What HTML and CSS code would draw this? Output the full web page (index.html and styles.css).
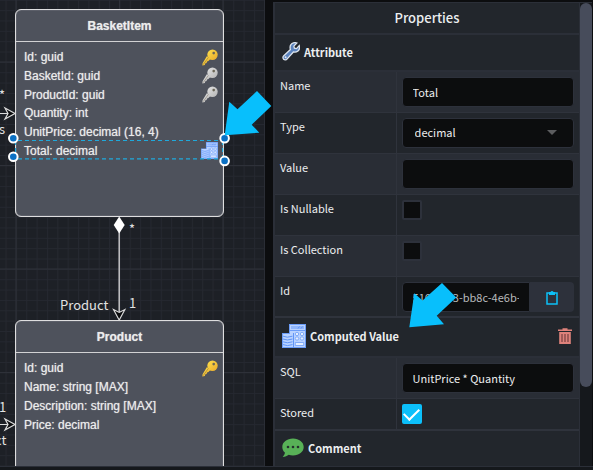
FILE: index.html
```html
<!DOCTYPE html>
<html lang="en">
<head>
<meta charset="utf-8">
<title>Domain Designer</title>
<link rel="stylesheet" href="styles.css">
</head>
<body>
<svg class="defs" aria-hidden="true">
  <defs>
    <linearGradient id="gold" x1="0" y1="0" x2="1" y2="1"><stop offset="0" stop-color="#ffe04a"/><stop offset="1" stop-color="#e8a92c"/></linearGradient>
    <linearGradient id="silver" x1="0" y1="0" x2="1" y2="1"><stop offset="0" stop-color="#e2e2e2"/><stop offset="1" stop-color="#b5b5b5"/></linearGradient>
    <symbol id="key-shape" viewBox="0 0 16 17">
      <path d="M4.800 7.200.600 14.200.300 16.400l2.600-.500.200-1.500 1.500-.300.400-1.700 1.400-.400 2.500-2.500z"/>
      <circle cx="10.500" cy="5.800" r="5.200"/>
      <path d="M6.400 8.400 1.200 15.600" fill="none" stroke="#60533b" stroke-opacity=".5" stroke-width=".8"/>
      <circle cx="11.700" cy="4.100" r="1.300" fill="#6b6656"/>
    </symbol>
    <symbol id="calculator" viewBox="0 0 24 24">
      <path fill="#6c9df8" d="M7 0h17v24H0V9h7z"/>
      <path fill="#b9d2ff" d="M8 1h15v5H8zM8 7h15v16H8zM1 10h10v13H1z"/>
      <path fill="#8fb5fb" d="M9 2h13v3H9z"/>
      <path d="M16 4.500l1.500-2M19 4.500l1.500-2M1 12.200q4 2 9.500 0M1 15q4 2 9.500 0M1 17.800q4 2 9.500 0M1 20.600q4 2 9.500 0M11.500 9v15" fill="none" stroke="#5f94f6" stroke-width="1"/>
      <g fill="#e6efff" stroke="#6c9df8" stroke-width=".8"><circle cx="15" cy="10" r="1.700"/><circle cx="20" cy="10" r="1.700"/><circle cx="15" cy="14.500" r="1.700"/><circle cx="20" cy="14.500" r="1.700"/><path d="M13.300 18.500h8.400v3h-8.400z"/></g>
    </symbol>
  </defs>
</svg>
<div class="app">
  <main class="canvas">
    <svg class="layer" aria-hidden="true">
      <defs>
        <pattern id="minor" x="15.900" y="61.900" width="10.350" height="10.350" patternUnits="userSpaceOnUse"><path d="M0 .5h10.350M.5 0v10.350" stroke="#252830" fill="none"/></pattern>
        <pattern id="major" x="15.500" y="61.500" width="103.500" height="103.500" patternUnits="userSpaceOnUse"><path d="M0 .5h103.500M.5 0v103.500" stroke="#2e3139" fill="none"/></pattern>
      </defs>
      <rect width="100%" height="100%" fill="url(#minor)"/>
      <rect width="100%" height="100%" fill="url(#major)"/>
    </svg>

    <section class="entity basket">
      <h2>BasketItem</h2>
      <ul>
        <li>Id: guid <svg class="key" fill="url(#gold)"><use href="#key-shape"/></svg></li>
        <li>BasketId: guid <svg class="key" fill="url(#silver)"><use href="#key-shape"/></svg></li>
        <li>ProductId: guid <svg class="key" fill="url(#silver)"><use href="#key-shape"/></svg></li>
        <li>Quantity: int</li>
        <li>UnitPrice: decimal (16, 4)</li>
        <li>Total: decimal <svg class="calc"><use href="#calculator"/></svg></li>
      </ul>
    </section>
    <section class="entity product">
      <h2>Product</h2>
      <ul>
        <li>Id: guid <svg class="key" fill="url(#gold)"><use href="#key-shape"/></svg></li>
        <li>Name: string [MAX]</li>
        <li>Description: string [MAX]</li>
        <li>Price: decimal</li>
      </ul>
    </section>

    <svg class="layer" aria-hidden="true">
      <g fill="none" stroke="#1fa9dc" stroke-width="1.200" stroke-dasharray="4 3"><path d="M18 140.500h203M18 158.800h203M222.600 141v18M15.500 141v18"/></g>
      <g fill="#0a70c4" stroke="#fff" stroke-width="2"><circle cx="13.300" cy="138.300" r="4.300"/><circle cx="13.300" cy="156.700" r="4.300"/><circle cx="224.600" cy="138.300" r="4.300"/><circle cx="224.600" cy="160.900" r="4.300"/></g>
      <path d="M119.200 232v80" stroke="#c4c4c6" stroke-width="1.500"/>
      <path d="M119.200 216.500l5.500 8.500-5.500 8.500-5.500-8.500z" fill="#fff"/>
      <path d="M113.500 309.500l5.700 3 5.700-3-5.700 10.500z" fill="#0b0c0e" stroke="#dcdcdc" stroke-width="1.100"/>
      <g fill="#0b0c0e" stroke="#dcdcdc" stroke-width="1.200"><path d="M0 113.500h8M5 108l10 5.500-10 5.500 3-5.500z"/><path d="M0 424.500h8M5 419l10 5.500-10 5.500 3-5.500z"/></g>
    </svg>
    <span class="mark many-left">*</span>
    <span class="mark role-left">s</span>
    <span class="mark many">*</span>
    <span class="mark role">Product</span>
    <span class="mark one">1</span>
    <span class="mark one-left">1</span>
    <span class="mark end-left">ct</span>
  </main>

  <aside class="panel">
    <div class="scroller">
      <h1>Properties</h1>
      <h2 class="group"><svg width="18" height="19" viewBox="0 0 18 19"><path d="M11.500.8c1.300-.3 2.500-.2 3.400.2l-3 3.100.5 2 2.100.5 2.800-3c.6 2 .2 4-1.300 5.300-1.400 1.200-3 1.500-4.600 1.100L5.200 16.800c-1 1.300-2.600 1.300-3.600.4-1-1-.9-2.500.2-3.500L8.400 7.600C7.600 4.400 8.800 1.700 11.500.8z" fill="#5b83be" stroke="#dde4ed" stroke-width="1.300"/><circle cx="3.600" cy="15.300" r="1" fill="#dde4ed"/></svg>Attribute</h2>
      <div class="row alt"><label for="name">Name</label><div class="value"><input class="text" id="name" type="text" value="Total"></div></div>
      <div class="row"><label for="type">Type</label><div class="value select"><select class="text" id="type"><option>decimal</option></select></div></div>
      <div class="row alt"><label for="val">Value</label><div class="value"><input class="text" id="val" type="text"></div></div>
      <div class="row"><label for="nullable">Is Nullable</label><div class="value"><input class="check" id="nullable" type="checkbox"></div></div>
      <div class="row alt"><label for="collection">Is Collection</label><div class="value"><input class="check" id="collection" type="checkbox"></div></div>
      <div class="row"><label for="id">Id</label><div class="value joined"><input class="text" id="id" type="text" readonly value="51623f73-bb8c-4e6b-"><button class="copy" type="button" aria-label="Copy"><svg width="12" height="15" viewBox="0 0 12 15"><path d="M1 3h10v11H1z" fill="none" stroke="#0cc0f7" stroke-width="1.500"/><path d="M3 2h1.500a1.600 1.600 0 0 1 3 0H9v3H3z" fill="#0cc0f7"/></svg></button></div></div>
      <h2 class="group tall"><svg width="24" height="24"><use href="#calculator"/></svg>Computed Value<button class="trash" type="button" aria-label="Remove"><svg width="14" height="16" viewBox="0 0 14 16"><path d="M0 1.500h4.500V.3h5v1.200H14V3H0zM1.200 4h11.600v12H1.200z" fill="#df827b"/><path d="M4 6v8M7 6v8M10 6v8" stroke="#8c4d4c" stroke-width="1.500"/></svg></button></h2>
      <div class="row alt"><label for="sql">SQL</label><div class="value"><input class="text" id="sql" type="text" value="UnitPrice * Quantity"></div></div>
      <div class="row short"><label for="stored">Stored</label><div class="value"><input class="check" id="stored" type="checkbox" checked></div></div>
      <h2 class="group"><svg width="22" height="20" viewBox="0 0 22 20"><path d="M11 .5c6 0 10.700 3.600 10.700 8.500S17 17.500 11 17.500c-1.600 0-3-.2-4.300-.7-1.500 1.300-3.500 2-6 2.200 1.400-1.400 2.100-2.800 2.200-4.400C1.200 13.100.3 11.200.3 9 .3 4.100 5 .5 11 .5z" fill="#58b157"/><g fill="#24302d"><circle cx="6" cy="9" r="1.300"/><circle cx="11" cy="9" r="1.300"/><circle cx="16" cy="9" r="1.300"/></g></svg>Comment</h2>
    </div>
    <div class="track"><div class="thumb"></div></div>
  </aside>
</div>
<footer class="status"></footer>
<svg class="pointers" aria-hidden="true"><g fill="#08bffc"><path d="M224.700 135.300l4.600-33.600 8.200 7.600L257 91l14.300 15-19.600 18.700 7.600 8z"/><path d="M409.300 327.300l5-34 8.200 7.200L442 283l14.200 14.500-19.500 18.200 7.300 8.600z"/></g></svg>
</body>
</html>
```
FILE: styles.css
```css
* {
  box-sizing: border-box;
}

body {
  margin: 0;
  height: 100vh;
  display: flex;
  flex-direction: column;
  overflow: hidden;
  background: #0c0d0f;
  color: #eceef0;
  font: 11px/20px "Noto Sans CJK SC", sans-serif;
}

h1, h2, ul {
  margin: 0;
  padding: 0;
}

.defs {
  position: absolute;
  width: 0;
  height: 0;
}

.app {
  flex: 1;
  min-height: 0;
  display: grid;
  grid-template-columns: 265px minmax(0, 1fr);
  gap: 8px;
}

.canvas {
  position: relative;
  overflow: hidden;
  background: #1d2026;
  border-right: 1px solid #2a2d35;
}

.layer {
  position: absolute;
  top: 0;
  left: 0;
  width: 100%;
  height: 100%;
}

.entity {
  position: absolute;
  left: 15px;
  width: 209px;
  border: 1px solid #dededf;
  border-radius: 6px;
  background: #4e525c;
  box-shadow: inset 0 0 1px #dededf;
  color: #ececec;
  font: 12px/18px "Liberation Sans", Arial, sans-serif;
  text-shadow: 0 0 1px #bfc0c3;
}

.basket {
  top: 9px;
  height: 208px;
}

.product {
  top: 320px;
  height: 208px;
}

.entity h2 {
  height: 32px;
  border-bottom: 1px solid #d2d2d4;
  font-size: 12px;
  font-weight: bold;
  line-height: 32px;
  text-align: center;
}

.entity ul {
  display: grid;
  grid-auto-rows: 1fr;
  height: 81px;
  padding: 6px 5px 0 8px;
  list-style: none;
}

.basket ul {
  height: 118px;
}

.entity li {
  display: flex;
  justify-content: space-between;
  align-items: center;
  white-space: nowrap;
}

.key {
  width: 16px;
  height: 17px;
}

.calc {
  width: 17px;
  height: 17px;
}

.mark {
  position: absolute;
  color: #e2e2e2;
  font-size: 13px;
}

.many-left { left: -1px; top: 85px; }
.role-left { left: -1px; top: 119px; }
.many { left: 129px; top: 219px; }
.role { left: 60px; top: 295px; }
.one { left: 129px; top: 293px; }
.one-left { left: -1px; top: 397px; }
.end-left { left: -5px; top: 430px; }

.panel {
  display: flex;
  min-height: 0;
  margin: 2px 1px 0 0;
  border-top: 1px solid #2b2f38;
  border-left: 2px solid #2b2f38;
  background: #15181c;
}

.scroller {
  flex: 1;
  min-width: 0;
  overflow: hidden;
  border-right: 1px solid #2b2f38;
  background: #22262c;
}

h1 {
  height: 32px;
  border-bottom: 2px solid #2b2f38;
  font-size: 13px;
  font-weight: 500;
  line-height: 30px;
  text-align: center;
}

.group {
  display: flex;
  align-items: center;
  gap: 4px;
  height: 37px;
  padding: 0 7px 2px;
  border-bottom: 2px solid #2b2f38;
  font-size: 11px;
  font-weight: bold;
}

.group.tall {
  height: 40px;
}

.row {
  display: grid;
  grid-template-columns: 2fr 3fr;
  height: 41px;
  border-bottom: 1px solid #2f333c;
}

.row.alt {
  background: #292d35;
}

.row.short {
  height: 32px;
}

.row label {
  padding: 3px 5px;
  border-right: 1px solid #2f333c;
}

.value {
  padding: 5px;
}

.row:has(+ .group) {
  border-bottom-width: 2px;
}

.text {
  width: 100%;
  height: 30px;
  margin: 0;
  padding: 0 10px;
  border: 1px solid #2d313b;
  border-radius: 4px;
  outline: 0;
  background: #0c0d0e;
  color: #eceef0;
  font: 11px/20px "Noto Sans CJK SC", sans-serif;
  appearance: none;
}

.select {
  position: relative;
}

.select .text {
  padding: 0 12px 2px;
}

.select::after {
  content: "";
  position: absolute;
  top: 17px;
  right: 22px;
  border: 5px solid transparent;
  border-top-color: #5c5d5f;
  border-bottom: 0;
}

.check {
  display: grid;
  place-items: center;
  width: 20px;
  height: 20px;
  margin: 0;
  border: 2px solid #2d313b;
  border-radius: 2px;
  background: #0c0d0e;
  appearance: none;
}

.check:checked {
  border-color: #0cc0fb;
  background: #0cc0fb;
}

.check:checked::after {
  content: "";
  width: 13px;
  height: 7px;
  margin-bottom: 4px;
  border: solid #fff;
  border-width: 0 0 2px 2px;
  transform: rotate(-45deg);
}

.joined {
  display: flex;
}

.joined .text {
  flex: 1;
  min-width: 0;
  border-radius: 4px 0 0 4px;
  color: #b9bbbd;
}

.copy {
  display: grid;
  place-items: center;
  width: 44px;
  height: 30px;
  padding: 0;
  border: 0;
  border-radius: 0 4px 4px 0;
  background: #2d313b;
}

.trash {
  display: flex;
  margin-left: auto;
  padding: 0;
  border: 0;
  background: none;
}

.track {
  width: 12px;
}

.thumb {
  height: 83%;
  border-radius: 6px;
  background: #474c5b;
}

.status {
  height: 4px;
  border-top: 1px solid #2b2f38;
  background: #15181c;
}

.pointers {
  position: absolute;
  top: 0;
  left: 0;
  width: 100%;
  height: 100%;
  pointer-events: none;
}
```
